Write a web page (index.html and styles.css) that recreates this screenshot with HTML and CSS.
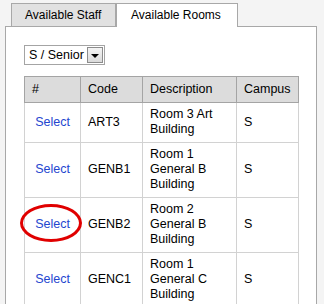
FILE: index.html
```html
<!DOCTYPE html>
<html>
<head>
<meta charset="utf-8">
<link rel="stylesheet" href="styles.css">
</head>
<body>
<div class="wrap">
  <div class="tabs">
    <div class="tab">Available Staff</div>
    <div class="tab active">Available Rooms</div>
  </div>
  <div class="panel">
    <div class="dropdown">
      <span class="dd-text">S / Senior</span>
      <span class="dd-btn"><span class="tri"></span></span>
    </div>
    <div class="tablewrap">
      <table class="grid">
        <colgroup>
          <col class="c1"><col class="c2"><col class="c3"><col class="c4">
        </colgroup>
        <thead>
          <tr><th>#</th><th>Code</th><th>Description</th><th>Campus</th></tr>
        </thead>
        <tbody>
          <tr><td class="sel"><a href="#">Select</a></td><td>ART3</td><td>Room 3 Art Building</td><td>S</td></tr>
          <tr><td class="sel"><a href="#">Select</a></td><td>GENB1</td><td>Room 1 General B Building</td><td>S</td></tr>
          <tr><td class="sel"><a href="#">Select</a></td><td>GENB2</td><td>Room 2 General B Building</td><td>S</td></tr>
          <tr><td class="sel"><a href="#">Select</a></td><td>GENC1</td><td>Room 1 General C Building</td><td>S</td></tr>
        </tbody>
      </table>
      <div class="circle"></div>
    </div>
  </div>
</div>
</body>
</html>
```
FILE: styles.css
```css
html, body {
  margin: 0;
  padding: 0;
  overflow: hidden;
  background: #f4f4f4;
  font-family: "Liberation Sans", Arial, sans-serif;
  font-size: 12.5px;
  color: #000;
}
.wrap {
  padding: 3px 0 0 5px;
  width: 312px;
}
.tabs {
  display: flex;
  padding-left: 6px;
  height: 23px;
}
.tab {
  box-sizing: border-box;
  height: 23px;
  line-height: 22px;
  padding: 0 0 0 13px;
  width: 105px;
  border: 1px solid #a8a8a8;
  border-bottom: none;
  background: #e1e1e1;
  white-space: nowrap;
  font-size: 12px;
}
.tab.active {
  width: 122px;
  padding-left: 14px;
  background: #fff;
  height: 24px;
  position: relative;
  z-index: 1;
}
.panel {
  box-sizing: border-box;
  border: 1px solid #a8a8a8;
  background: #fff;
  height: 400px;
  padding: 18px 0 0 18px;
}
.dropdown {
  box-sizing: border-box;
  display: flex;
  align-items: center;
  width: 81px;
  height: 20px;
  border: 1px solid #a4a4a4;
  background: #fff;
}
.dd-text {
  flex: 1;
  padding-left: 4px;
  line-height: 18px;
  white-space: nowrap;
}
.dd-btn {
  box-sizing: border-box;
  width: 16px;
  height: 16px;
  margin-right: 1px;
  border: 1px solid #8c8c8c;
  background: linear-gradient(#f4f4f4, #dadada);
  display: flex;
  align-items: center;
  justify-content: center;
}
.tri {
  width: 0;
  height: 0;
  border-left: 4px solid transparent;
  border-right: 4px solid transparent;
  border-top: 4px solid #000;
  margin-top: 1px;
}
.tablewrap {
  position: relative;
  margin-top: 11px;
}
.grid {
  border-collapse: collapse;
  table-layout: fixed;
  width: 274px;
  border: 1px solid #a4a4a4;
}
.c1 { width: 56px; }
.c2 { width: 62px; }
.c3 { width: 94px; }
.c4 { width: 62px; }
.grid th {
  background: #dcdcdc;
  font-weight: normal;
  text-align: left;
  height: 25px;
  padding: 0 7px;
  border: 1px solid #a4a4a4;
  line-height: 15px;
}
.grid td {
  border: 1px solid #d2d2d2;
  padding: 4px 7px 5px 7px;
  line-height: 15px;
  vertical-align: middle;
}
.grid tbody tr:first-child td { height: 30px; }
.grid td.sel {
  text-align: center;
  padding-left: 4px;
  padding-right: 4px;
}
.grid a {
  color: #2446cf;
  text-decoration: none;
}
.circle {
  position: absolute;
  left: -4px;
  top: 128px;
  width: 56px;
  height: 32px;
  border: 3px solid #e00000;
  border-radius: 50%;
}
```
